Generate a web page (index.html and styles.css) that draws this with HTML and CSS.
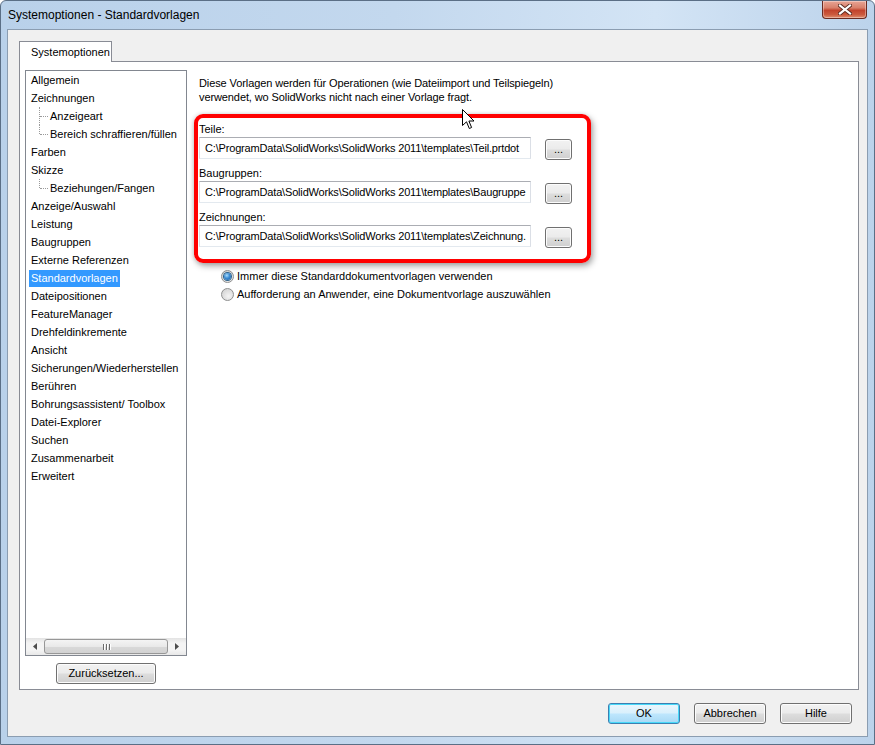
FILE: index.html
```html
<!DOCTYPE html>
<html lang="de">
<head>
<meta charset="utf-8">
<title>Systemoptionen - Standardvorlagen</title>
<link rel="stylesheet" href="styles.css">
</head>
<body>
<div class="window">
  <div class="titlebar">
    <span class="title">Systemoptionen - Standardvorlagen</span>
    <div class="close-btn">
      <svg width="14" height="11" viewBox="0 0 14 11"><path d="M2 1.5 L12 9.5 M12 1.5 L2 9.5" stroke="#5a2a20" stroke-width="4" stroke-linecap="square"/><path d="M2 1.5 L12 9.5 M12 1.5 L2 9.5" stroke="#ffffff" stroke-width="2.2" stroke-linecap="square"/></svg>
    </div>
  </div>
  <div class="client">
    <div class="tabs">
      <div class="tab">Systemoptionen</div>
    </div>
    <div class="panel">
      <div class="left-col">
        <div class="listbox">
          <div class="items">
            <div class="item">Allgemein</div>
            <div class="item">Zeichnungen</div>
            <div class="item child">Anzeigeart</div>
            <div class="item child last">Bereich schraffieren/füllen</div>
            <div class="item">Farben</div>
            <div class="item">Skizze</div>
            <div class="item child last">Beziehungen/Fangen</div>
            <div class="item">Anzeige/Auswahl</div>
            <div class="item">Leistung</div>
            <div class="item">Baugruppen</div>
            <div class="item">Externe Referenzen</div>
            <div class="item"><span class="selected">Standardvorlagen</span></div>
            <div class="item">Dateipositionen</div>
            <div class="item">FeatureManager</div>
            <div class="item">Drehfeldinkremente</div>
            <div class="item">Ansicht</div>
            <div class="item">Sicherungen/Wiederherstellen</div>
            <div class="item">Berühren</div>
            <div class="item">Bohrungsassistent/ Toolbox</div>
            <div class="item">Datei-Explorer</div>
            <div class="item">Suchen</div>
            <div class="item">Zusammenarbeit</div>
            <div class="item">Erweitert</div>
          </div>
          <div class="hscroll">
            <div class="arrow"><svg width="4" height="7" viewBox="0 0 4 7"><path d="M4 0 L0 3.5 L4 7 Z" fill="#4d4d4d"/></svg></div>
            <div class="track">
              <div class="thumb"><span class="grip"></span><span class="grip"></span><span class="grip"></span></div>
            </div>
            <div class="arrow"><svg width="4" height="7" viewBox="0 0 4 7"><path d="M0 0 L4 3.5 L0 7 Z" fill="#4d4d4d"/></svg></div>
          </div>
        </div>
        <button class="btn reset-btn">Zurücksetzen...</button>
      </div>
      <div class="content">
        <p class="intro">Diese Vorlagen werden für Operationen (wie Dateiimport und Teilspiegeln)<br>verwendet, wo SolidWorks nicht nach einer Vorlage fragt.</p>
        <div class="group">
          <div class="label">Teile:</div>
          <div class="field-row">
            <div class="field">C:\ProgramData\SolidWorks\SolidWorks 2011\templates\Teil.prtdot</div>
            <button class="btn dots">...</button>
          </div>
        </div>
        <div class="group">
          <div class="label">Baugruppen:</div>
          <div class="field-row">
            <div class="field">C:\ProgramData\SolidWorks\SolidWorks 2011\templates\Baugruppe</div>
            <button class="btn dots">...</button>
          </div>
        </div>
        <div class="group">
          <div class="label">Zeichnungen:</div>
          <div class="field-row">
            <div class="field">C:\ProgramData\SolidWorks\SolidWorks 2011\templates\Zeichnung.</div>
            <button class="btn dots">...</button>
          </div>
        </div>
        <div class="radios">
          <div class="radio-row"><span class="radio checked"></span><span>Immer diese Standarddokumentvorlagen verwenden</span></div>
          <div class="radio-row"><span class="radio"></span><span>Aufforderung an Anwender, eine Dokumentvorlage auszuwählen</span></div>
        </div>
        <div class="highlight-box"></div>
        <svg class="cursor" width="13" height="21" viewBox="0 0 13 21"><path d="M0.5 0.5 L0.5 16.5 L4.5 12.8 L7.3 19.5 L9.6 18.5 L6.9 12 L12 12 Z" fill="#ffffff" stroke="#000000" stroke-width="1" stroke-linejoin="miter"/></svg>
      </div>
    </div>
    <div class="dialog-buttons">
      <button class="btn default">OK</button>
      <button class="btn">Abbrechen</button>
      <button class="btn">Hilfe</button>
    </div>
  </div>
</div>
</body>
</html>
```
FILE: styles.css
```css
html, body {
  margin: 0;
  padding: 0;
}
body {
  width: 875px;
  height: 745px;
  overflow: hidden;
  background: #ffffff;
  font-family: "Liberation Sans", Arial, sans-serif;
  font-size: 11px;
  color: #000000;
}
.window {
  width: 875px;
  height: 745px;
  box-sizing: border-box;
  display: flex;
  flex-direction: column;
  border: 1px solid #5b6f86;
  border-radius: 6px 6px 0 0;
  padding: 0 6px 7px 6px;
  background: linear-gradient(90deg, #b9d1ea 0%, #c3d8ee 45%, #d3e4f5 75%, #bcd3eb 100%);
}
.titlebar {
  height: 28px;
  display: flex;
  align-items: flex-start;
  flex: none;
}
.title {
  padding-left: 1px;
  margin-top: 7px;
  font-size: 12px;
  line-height: 15px;
  color: #000000;
}
.close-btn {
  margin-left: auto;
  margin-right: 1px;
  width: 45px;
  height: 18px;
  box-sizing: border-box;
  border: 1px solid #6a2b22;
  border-top: none;
  border-radius: 0 0 4px 4px;
  background: linear-gradient(180deg, #e8a595 0%, #d8806b 40%, #c2432c 55%, #cc5a3e 80%, #e08e6f 100%);
  display: flex;
  align-items: center;
  justify-content: center;
  box-shadow: inset 0 0 0 1px rgba(255,255,255,0.35);
}
.client {
  flex: 1;
  border: 1px solid #8b9db1;
  background: #f0f0f0;
  padding: 11px 8px 0 11px;
  display: flex;
  flex-direction: column;
}
.tabs {
  display: flex;
  height: 20px;
  position: relative;
  z-index: 1;
}
.tab {
  width: 93px;
  box-sizing: border-box;
  height: 21px;
  border: 1px solid #898c95;
  border-bottom: none;
  background: #ffffff;
  padding-left: 11px;
  line-height: 20px;
}
.panel {
  width: 840px;
  height: 629px;
  box-sizing: border-box;
  border: 1px solid #898c95;
  background: #ffffff;
  padding: 8px 0 0 5px;
  display: flex;
}
.left-col {
  width: 162px;
  display: flex;
  flex-direction: column;
  align-items: center;
}
.listbox {
  width: 162px;
  height: 586px;
  box-sizing: border-box;
  border: 1px solid #828790;
  display: flex;
  flex-direction: column;
  background: #ffffff;
}
.items {
  flex: 1;
  overflow: hidden;
}
.item {
  height: 18px;
  line-height: 18px;
  padding-left: 5px;
  white-space: nowrap;
  position: relative;
}
.item.child {
  padding-left: 24px;
}
.item.child::before {
  content: "";
  position: absolute;
  left: 13px;
  top: 0;
  height: 18px;
  border-left: 1px dotted #9a9a9a;
}
.item.child.last::before {
  height: 9px;
}
.item.child::after {
  content: "";
  position: absolute;
  left: 14px;
  top: 9px;
  width: 8px;
  border-top: 1px dotted #9a9a9a;
}
.selected {
  display: inline-block;
  background: #3399ff;
  color: #ffffff;
  padding: 0 2px;
  margin-left: -2px;
  line-height: 17px;
}
.hscroll {
  height: 17px;
  display: flex;
  background: linear-gradient(180deg, #e3e3e3 0%, #f4f4f4 30%, #f4f4f4 70%, #e8e8e8 100%);
  flex: none;
}
.arrow {
  width: 18px;
  display: flex;
  align-items: center;
  justify-content: center;
}
.track {
  flex: 1;
  padding: 1px 0;
  display: flex;
}
.thumb {
  flex: 1;
  box-sizing: border-box;
  border: 1px solid #979797;
  border-radius: 3px;
  background: linear-gradient(180deg, #f4f4f4 0%, #e9e9e9 50%, #d9d9d9 51%, #d2d2d2 100%);
  display: flex;
  align-items: center;
  justify-content: center;
  gap: 2px;
}
.grip {
  width: 1px;
  height: 6px;
  background: #6b6b6b;
  box-shadow: 1px 0 0 #ffffff;
}
.btn {
  font-family: inherit;
  font-size: 11px;
  color: #000000;
  box-sizing: border-box;
  height: 21px;
  border: 1px solid #707070;
  border-radius: 3px;
  background: linear-gradient(180deg, #f2f2f2 0%, #ebebeb 48%, #dddddd 52%, #cfcfcf 100%);
  box-shadow: inset 0 0 0 1px #fcfcfc;
  padding: 0;
  margin: 0;
  line-height: 19px;
  text-align: center;
}
.reset-btn {
  width: 100px;
  margin-top: 7px;
}
.content {
  position: relative;
  margin-left: 12px;
  margin-top: 6px;
  flex: 1;
}
.intro {
  margin: 0;
  line-height: 14px;
  letter-spacing: -0.1px;
}
.group {
  margin-top: 18px;
}
.group + .group {
  margin-top: 6px;
}
.label {
  line-height: 14px;
  height: 14px;
}
.field-row {
  margin-top: 1px;
  display: flex;
  align-items: flex-start;
}
.field {
  width: 332px;
  height: 22px;
  box-sizing: border-box;
  border: 1px solid #dbdfe6;
  border-top-color: #abadb3;
  border-bottom-color: #e3e9ef;
  padding-left: 5px;
  line-height: 20px;
  letter-spacing: -0.17px;
  white-space: nowrap;
  overflow: hidden;
}
.dots {
  width: 27px;
  margin-left: 14px;
  margin-top: 2px;
  line-height: 17px;
}
.radios {
  margin-top: 19px;
  padding-left: 22px;
}
.radio-row {
  height: 18px;
  display: flex;
  align-items: center;
  gap: 3px;
}
.radio {
  width: 13px;
  height: 13px;
  box-sizing: border-box;
  border-radius: 50%;
  border: 1px solid #8e8f8f;
  background: radial-gradient(circle at 60% 65%, #f4f4f4 0%, #dcdcdc 60%, #cbcbcb 100%);
  position: relative;
}
.radio.checked::after {
  content: "";
  position: absolute;
  left: 2px;
  top: 2px;
  width: 7px;
  height: 7px;
  border-radius: 50%;
  background: radial-gradient(circle at 40% 35%, #a8dcfb 0%, #3b8bd4 45%, #1c5d9c 100%);
  box-shadow: 0 0 0 1px #2c628b;
}
.highlight-box {
  position: absolute;
  left: -5px;
  top: 38px;
  width: 397px;
  height: 149px;
  box-sizing: border-box;
  border: 4px solid #ff0000;
  border-radius: 9px;
  box-shadow: 2px 3px 6px rgba(0,0,0,0.35), -1px 0 4px rgba(0,0,0,0.12);
  pointer-events: none;
}
.cursor {
  position: absolute;
  left: 263px;
  top: 33px;
}
.dialog-buttons {
  display: flex;
  justify-content: flex-end;
  gap: 14px;
  margin-top: 13px;
  padding-right: 7px;
}
.dialog-buttons .btn {
  width: 72px;
  height: 21px;
}
.dialog-buttons .btn.default {
  border-color: #3c7fb1;
  background: linear-gradient(180deg, #eaf6fd 0%, #d9f0fc 48%, #bee6fd 52%, #a7d9f5 100%);
  box-shadow: inset 0 0 0 1px #48d9f9;
}
```
